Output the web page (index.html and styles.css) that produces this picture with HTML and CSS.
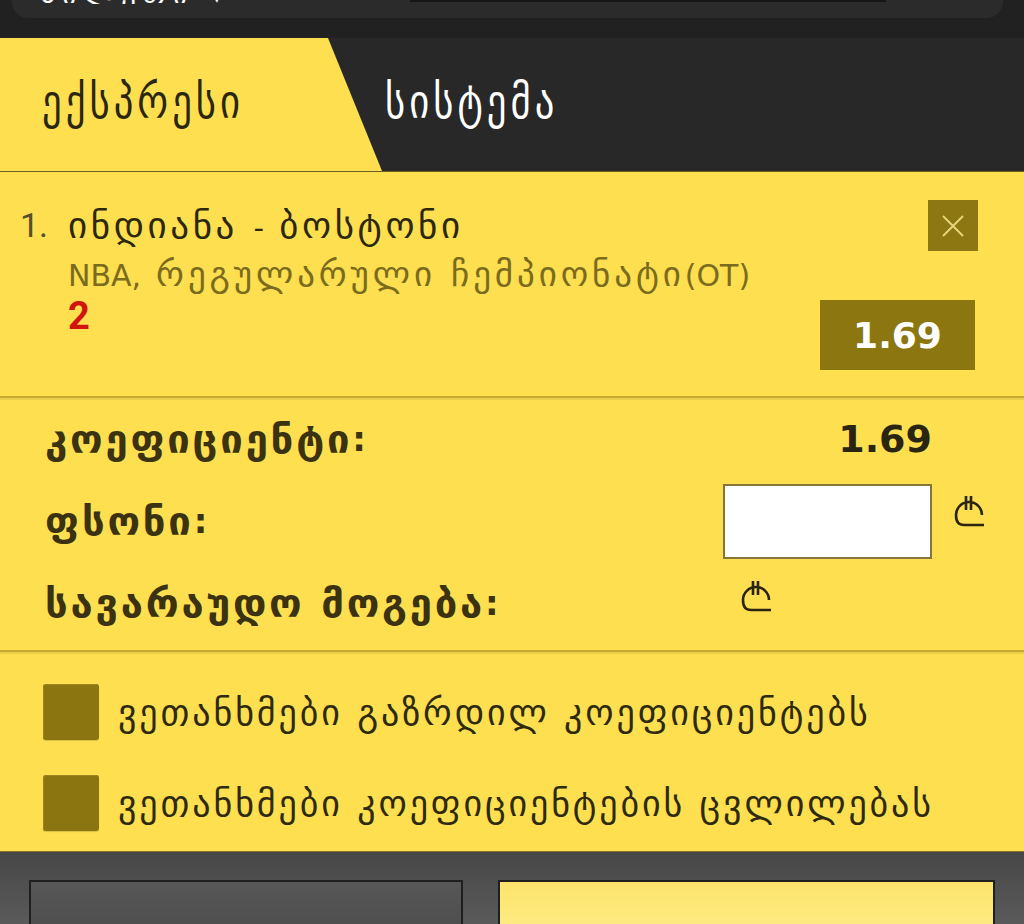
FILE: index.html
```html
<!DOCTYPE html>
<html lang="ka">
<head>
<meta charset="utf-8">
<title>ბილეთი</title>
<link rel="stylesheet" href="styles.css">
</head>
<body>
<div class="topbar">
  <div class="toppanel">
    <div class="topclip"><span class="toptext">ბილეთი ▾</span></div>
    <div class="topfield"></div>
  </div>
</div>

<div class="tabs">
  <div class="tab tab-active"><span class="tablabel">ექსპრესი</span></div>
  <div class="tab tab-dark"><span class="tablabel">სისტემა</span></div>
</div>

<section class="event">
  <div class="num">1.</div>
  <div class="info">
    <div class="title">ინდიანა <span class="lat">-</span> ბოსტონი</div>
    <div class="league"><span class="lat">NBA,</span> რეგულარული ჩემპიონატი<span class="lat">(OT)</span></div>
    <div class="pick">2</div>
  </div>
  <div class="side">
    <div class="close">
      <svg width="24" height="24" viewBox="0 0 24 24"><path d="M2 2 L22 22 M22 2 L2 22" stroke="#e8d27a" stroke-width="2" fill="none"/></svg>
    </div>
    <div class="odds">1.69</div>
  </div>
</section>

<section class="summary">
  <div class="label">კოეფიციენტი<span class="lat">:</span></div>
  <div class="value">1.69</div>
  <div class="cur"></div>

  <div class="label">ფსონი<span class="lat">:</span></div>
  <div class="value"><div class="stake"></div></div>
  <div class="cur">
    <svg class="lari" width="34" height="36" viewBox="0 0 34 36"><path d="M30 23 A13 13 0 0 0 4 23 C4 30 7 33 12 33 L32 33 M14 4 L14 18 M19 4 L19 18" stroke="#2a2410" stroke-width="2.6" fill="none"/></svg>
  </div>

  <div class="label">სავარაუდო მოგება<span class="lat">:</span></div>
  <div class="value value-left">
    <svg class="lari" width="34" height="36" viewBox="0 0 34 36"><path d="M30 23 A13 13 0 0 0 4 23 C4 30 7 33 12 33 L32 33 M14 4 L14 18 M19 4 L19 18" stroke="#2a2410" stroke-width="2.6" fill="none"/></svg>
  </div>
  <div class="cur"></div>
</section>

<section class="agree">
  <label class="check"><span class="box"></span><span class="checktext">ვეთანხმები გაზრდილ კოეფიციენტებს</span></label>
  <label class="check"><span class="box"></span><span class="checktext">ვეთანხმები კოეფიციენტების ცვლილებას</span></label>
</section>

<footer class="actions">
  <div class="btn btn-dark"></div>
  <div class="btn btn-yellow"></div>
</footer>
</body>
</html>
```

FILE: styles.css
```css
* { box-sizing: border-box; }
html, body { margin: 0; padding: 0; }
body {
  width: 1024px;
  height: 924px;
  overflow: hidden;
  background: #fddf50;
  font-family: "DejaVu Sans", "Noto Sans", sans-serif;
  color: #2c2810;
}

.topbar {
  height: 38px;
  background: #212121;
  padding: 0 21px 0 12px;
}
.toppanel {
  height: 18px;
  background: #2b2b2b;
  border-radius: 0 0 16px 16px;
  display: flex;
  align-items: flex-start;
  padding-left: 28px;
}
.topclip {
  height: 4px;
  overflow: hidden;
  width: 370px;
}
.toptext {
  display: block;
  color: #fff;
  font-size: 30px;
  line-height: 30px;
  margin-top: -22px;
  letter-spacing: 6px;
}
.topfield {
  width: 476px;
  height: 2px;
  background: #151515;
}

.tabs {
  height: 134px;
  display: flex;
  background: #282828;
  border-bottom: 1px solid #6a5e22;
}
.tab {
  display: flex;
  align-items: center;
  height: 100%;
}
.tab-active {
  width: 382px;
  background: #fddf50;
  clip-path: polygon(0 0, 328px 0, 382px 100%, 0 100%);
  padding-left: 42px;
  color: #2a2610;
}
.tab-dark {
  padding-left: 3px;
  color: #fff;
}
.tablabel {
  font-family: "DejaVu Sans Condensed", "DejaVu Sans", sans-serif;
  font-size: 43px;
  letter-spacing: 4px;
  display: inline-block;
  transform: scaleY(1.12);
  margin-top: -8px;
}

.lat { letter-spacing: 0; }

.event {
  display: flex;
  padding: 28px 46px 0 20px;
  height: 226px;
  border-bottom: 2px solid #c7aa34;
}
.num {
  width: 48px;
  font-family: Roboto, "DejaVu Sans", sans-serif;
  font-size: 34px;
  line-height: 50px;
  color: #55502a;
}
.info { flex: 1; }
.title {
  font-size: 37px;
  letter-spacing: 3.6px;
  line-height: 52px;
  color: #2c2810;
  white-space: nowrap;
}
.title .lat { font-size: 29px; }
.league {
  font-size: 35px;
  letter-spacing: 3.9px;
  line-height: 40px;
  color: #7a6b1e;
  white-space: nowrap;
}
.league .lat { font-size: 30px; }
.pick {
  font-family: Roboto, "DejaVu Sans", sans-serif;
  font-size: 38px;
  font-weight: bold;
  line-height: 44px;
  margin-top: -2px;
  color: #d0150e;
}
.side {
  display: flex;
  flex-direction: column;
  align-items: flex-end;
}
.close {
  width: 50px;
  height: 51px;
  background: #8c7712;
  display: flex;
  align-items: center;
  justify-content: center;
}
.odds {
  margin-top: 49px;
  margin-right: 3px;
  width: 155px;
  height: 70px;
  background: #8c7610;
  color: #fff;
  font-weight: bold;
  font-size: 36px;
  display: flex;
  align-items: center;
  justify-content: center;
}

.summary {
  display: grid;
  grid-template-columns: 1fr 209px 92px;
  grid-template-rows: 78px 86px 78px;
  padding: 0 0 8px 45px;
  border-top: 2px solid #ead04a;
  border-bottom: 2px solid #c7aa34;
}
.label {
  font-weight: bold;
  font-size: 40px;
  letter-spacing: 2.8px;
  color: #3a3210;
  display: flex;
  align-items: center;
  white-space: nowrap;
}
.label .lat { font-size: 34px; }
.value {
  display: flex;
  align-items: center;
  justify-content: flex-end;
  font-weight: bold;
  font-size: 38px;
  color: #2a2510;
}
.value-left {
  justify-content: flex-start;
  padding-left: 16px;
  padding-bottom: 16px;
}
.stake {
  width: 209px;
  height: 75px;
  background: #fff;
  border: 2px solid #857538;
}
.cur {
  display: flex;
  align-items: center;
  padding-left: 20px;
  padding-bottom: 22px;
}

.agree {
  display: flex;
  flex-direction: column;
  gap: 35px;
  padding: 30px 0 20px 43px;
  border-top: 2px solid #ead04a;
  height: 199px;
}
.check {
  display: flex;
  align-items: center;
  gap: 19px;
  color: #2e2a10;
}
.checktext {
  font-size: 36px;
  letter-spacing: 2.9px;
  white-space: nowrap;
}
.box {
  width: 56px;
  height: 56px;
  flex: none;
  border-radius: 3px;
  background: #8a7510;
  box-shadow: inset 1px 1px 0 #9c8620, 0 1px 1px rgba(0,0,0,0.15);
}

.actions {
  height: 73px;
  background: linear-gradient(#474747, #5a5a5a);
  border-top: 1px solid #857222;
  display: grid;
  grid-template-columns: 434px 497px;
  gap: 35px;
  padding: 28px 0 0 29px;
}
.btn {
  border: 2px solid #1f1f1f;
  border-bottom: none;
}
.btn-dark { background: linear-gradient(#575757, #4f4f4f); }
.btn-yellow { background: linear-gradient(#fde56c, #fdea80); }
```
